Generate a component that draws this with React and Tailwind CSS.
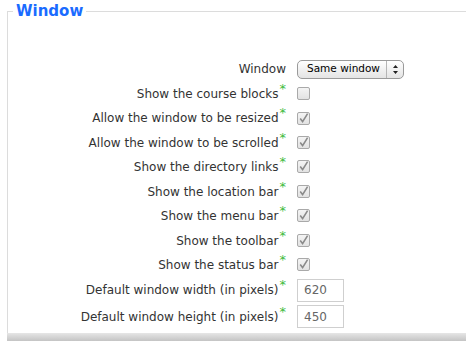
function Star() {
  return <span className="text-[#3dbb3d] text-[13px] relative -top-[5px] ml-[1px]">*</span>;
}

function Check({ checked }) {
  return (
    <span className="w-[13px] h-[13px] border border-[#a9a9a9] rounded-[2px] bg-gradient-to-b from-[#f4f4f4] to-[#e2e2e2] flex items-center justify-center">
      {checked && (
        <svg width="11" height="11" viewBox="0 0 11 11">
          <path d="M2.2 5.6 L4.6 8.6 L9.6 0.6" fill="none" stroke="#8a8a8a" strokeWidth="1.6" />
        </svg>
      )}
    </span>
  );
}

function Row({ label, children, tall }) {
  return (
    <div className={`flex items-center ${tall ? "h-[26.6px]" : "h-[24.45px]"}`}>
      <div className="w-[289px] text-right pr-[11px] text-[#333] whitespace-nowrap">
        {label}
        {label !== "Window" && <Star />}
      </div>
      <div className="flex items-center">{children}</div>
    </div>
  );
}

export default function App() {
  const checks = [
    ["Show the course blocks", false],
    ["Allow the window to be resized", true],
    ["Allow the window to be scrolled", true],
    ["Show the directory links", true],
    ["Show the location bar", true],
    ["Show the menu bar", true],
    ["Show the toolbar", true],
    ["Show the status bar", true],
  ];
  return (
    <div className="w-[466px] h-[344px] bg-white overflow-hidden" style={{ fontFamily: '"DejaVu Sans", Verdana, sans-serif' }}>
      <fieldset className="ml-[7px] mr-[-10px] border-l border-t border-[#dcdcdc] h-[332px] text-[12px] mt-[1px]">
        <legend className="ml-[5px] px-[3px] text-[#1a6bff] font-bold text-[15px] leading-[20px]">Window</legend>
        <div className="pt-[36px]">
          <Row label="Window">
            <div className="w-[107px] h-[19px] border border-[#9a9a9a] rounded-[5px] bg-gradient-to-b from-white to-[#e4e4e4] flex items-center text-[10.5px] text-black whitespace-nowrap">
              <span className="flex-1 pl-[9px]">Same window</span>
              <span className="w-[17px] h-full border-l border-[#b5b5b5] flex items-center justify-center">
                <svg width="7" height="11" viewBox="0 0 7 11">
                  <path d="M3.5 1 L6 4 L1 4 Z M3.5 10 L6 7 L1 7 Z" fill="#222" />
                </svg>
              </span>
            </div>
          </Row>
          {checks.map(([l, c]) => (
            <Row key={l} label={l}>
              <Check checked={c} />
            </Row>
          ))}
          <Row label="Default window width (in pixels)" tall>
            <div className="w-[47px] h-[23px] border border-[#cfcfcf] text-[12px] text-[#666] pl-[6px] flex items-center">620</div>
          </Row>
          <Row label="Default window height (in pixels)" tall>
            <div className="w-[47px] h-[23px] border border-[#cfcfcf] text-[12px] text-[#666] pl-[6px] flex items-center">450</div>
          </Row>
        </div>
      </fieldset>
      <div className="ml-[7px] h-[8px] bg-gradient-to-b from-[#e6e6e6] to-[#c4c4c4]" />
    </div>
  );
}
